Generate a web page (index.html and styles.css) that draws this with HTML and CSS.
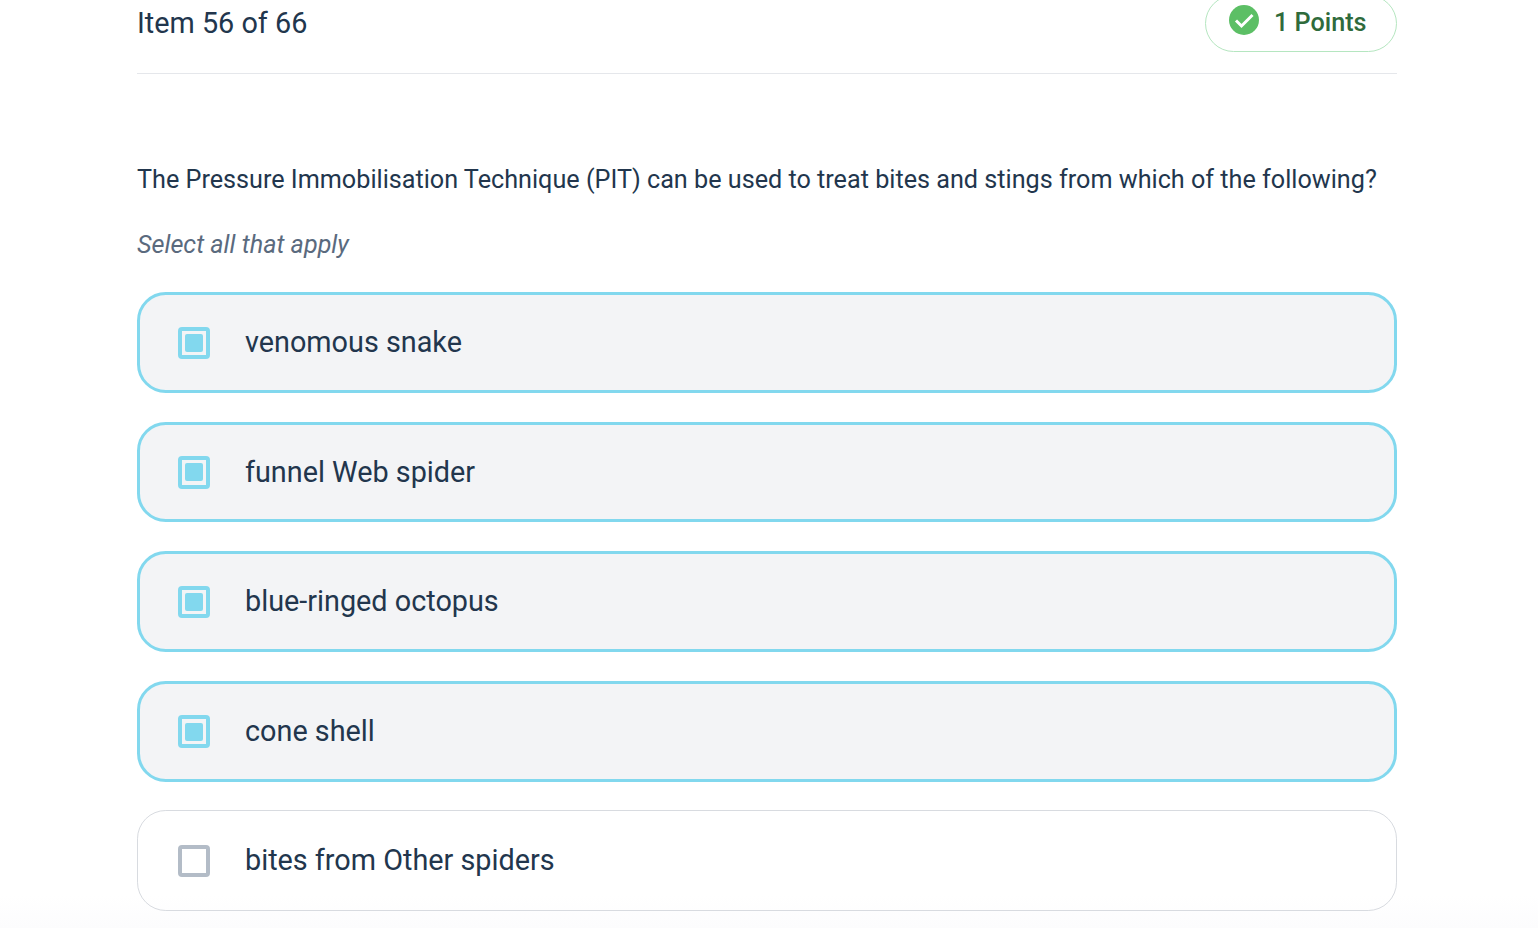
FILE: index.html
```html
<!DOCTYPE html>
<html lang="en">
<head>
    <meta charset="UTF-8">
    <title>Quiz Item</title>
    <link rel="stylesheet" href="styles.css">
</head>
<body>
    <div class="quiz-container">
        <div class="item-header">
            <span class="item-count">Item 56 of 66</span>
            <div class="points-pill">
                <svg class="points-icon" viewBox="0 0 30 30" width="30" height="30">
                    <circle cx="15" cy="15" r="15" fill="#5cbf65"/>
                    <path d="M7 15.5l5.5 5.5L23.5 10" fill="none" stroke="#fff" stroke-width="3"/>
                </svg>
                <span class="points-label">1 Points</span>
            </div>
        </div>
        <p class="question">The Pressure Immobilisation Technique (PIT) can be used to treat bites and stings from which of the following?</p>
        <p class="hint">Select all that apply</p>
        <div class="options">
            <label class="option selected"><span class="checkbox"></span>venomous snake</label>
            <label class="option selected"><span class="checkbox"></span>funnel Web spider</label>
            <label class="option selected"><span class="checkbox"></span>blue-ringed octopus</label>
            <label class="option selected"><span class="checkbox"></span>cone shell</label>
            <label class="option"><span class="checkbox"></span>bites from Other spiders</label>
        </div>
    </div>
</body>
</html>
```

FILE: styles.css
```css
html, body {
    height: 100%;
    overflow: hidden;
}
body {
    font-family: Roboto, "Liberation Sans", sans-serif;
    background: linear-gradient(to bottom, #fff 895px, #fcfcfd 928px);
    color: #22364d;
    margin: 0;
}
.quiz-container {
    width: 1260px;
    margin-left: 137px;
}
.item-header {
    display: flex;
    justify-content: space-between;
    align-items: center;
    margin-top: -6px;
    height: 80px;
    padding-bottom: 22px;
    box-sizing: border-box;
    border-bottom: 1px solid #e5e7eb;
}
.item-count {
    font-size: 28.8px;
}
.points-pill {
    display: flex;
    align-items: center;
    gap: 15px;
    width: 192px;
    height: 57px;
    margin-top: 2px;
    box-sizing: border-box;
    padding-left: 23px;
    border: 1px solid #b5e6c0;
    border-radius: 28.5px;
    color: #2f6b3c;
    font-size: 25.2px;
    font-weight: 500;
}
.points-icon {
    flex: none;
    margin-top: -7px;
}
.points-label {
    margin-top: -2px;
}
.question {
    font-size: 25.2px;
    line-height: 36px;
    margin: 88px 0 0;
}
.hint {
    font-size: 25.2px;
    line-height: 36px;
    font-style: italic;
    color: #5a6a7e;
    margin: 29px 0 0;
}
.options {
    display: flex;
    flex-direction: column;
    gap: 28.8px;
    margin-top: 29px;
}
.option {
    display: flex;
    align-items: center;
    gap: 34.6px;
    height: 100.8px;
    box-sizing: border-box;
    padding-left: 40px;
    padding-bottom: 1px;
    border: 1px solid #d8dbe0;
    border-radius: 28.8px;
    font-size: 28.8px;
}
.option.selected {
    border: 3px solid #82d8ee;
    background-color: #f3f4f6;
    padding-left: 38px;
    padding-bottom: 0.4px;
}
.checkbox {
    flex: none;
    display: flex;
    align-items: center;
    justify-content: center;
    width: 32.4px;
    height: 32.4px;
    margin-top: 1.4px;
    box-sizing: border-box;
    border: 4px solid #b3bcc7;
    border-radius: 4px;
}
.selected .checkbox {
    border-color: #82d8ee;
}
.selected .checkbox::before {
    content: "";
    width: 18px;
    height: 18px;
    border-radius: 2px;
    background-color: #82d8ee;
}
```
